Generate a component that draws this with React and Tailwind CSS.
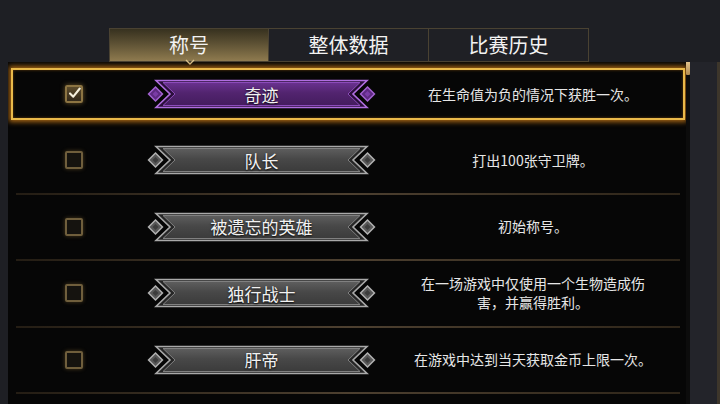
// Title list panel: tab strip on top, then a scrolling list of unlockable titles.
import React from 'react';

const TABS = ['称号', '整体数据', '比赛历史'];

const TITLES = [
  { name: '奇迹', desc: ['在生命值为负的情况下获胜一次。'], selected: true },
  { name: '队长', desc: ['打出100张守卫牌。'] },
  { name: '被遗忘的英雄', desc: ['初始称号。'] },
  { name: '独行战士', desc: ['在一场游戏中仅使用一个生物造成伤', '害，并赢得胜利。'] },
  { name: '肝帝', desc: ['在游戏中达到当天获取金币上限一次。'] },
];

const TONES = {
  grey: {
    id: 'rib-grey',
    edge: '#a9a9a9',
    back: '#262626',
    top: '#5e5e5e',
    mid: '#484848',
    bottom: '#3b3b3b',
    inner: '#808080',
    gemOut: '#b4b4b4',
    gemIn: '#585858',
    gemCore: '#3c3c3c',
  },
  purple: {
    id: 'rib-purple',
    edge: '#b06ee0',
    back: '#2a0f3a',
    top: '#6a3290',
    mid: '#52246f',
    bottom: '#441c5e',
    inner: '#8c4cba',
    gemOut: '#a564d4',
    gemIn: '#5e2a82',
    gemCore: '#7a3ca6',
  },
};

// diamond gem at either end of a ribbon
function Gem({ cx, t }) {
  const d = (r) => `${cx - r},15 ${cx},${15 - r} ${cx + r},15 ${cx},${15 + r}`;
  return (
    <g>
      <polygon points={d(8)} fill={t.gemOut} />
      <polygon points={d(6)} fill={t.gemIn} />
      <polygon points={d(3)} fill={t.gemCore} />
    </g>
  );
}

function Banner({ label, tone = 'grey' }) {
  const t = TONES[tone];
  return (
    <div className="relative w-[229px] h-[30px] flex items-center justify-center shrink-0">
      <svg className="absolute inset-0" width="229" height="30" viewBox="0 0 229 30">
        <defs>
          <linearGradient id={t.id} x1="0" y1="0" x2="0" y2="1">
            <stop offset="0" stopColor={t.top} />
            <stop offset="0.45" stopColor={t.mid} />
            <stop offset="1" stopColor={t.bottom} />
          </linearGradient>
        </defs>
        <polygon
          points="9,1.5 220,1.5 206,15 220,28.5 9,28.5 23,15"
          fill={t.back}
          stroke={t.edge}
          strokeWidth="1.6"
        />
        <polygon
          points="16,3.5 213,3.5 201,15 213,26.5 16,26.5 28,15"
          fill={`url(#${t.id})`}
          stroke={t.inner}
          strokeWidth="1"
        />
        <Gem cx={8.5} t={t} />
        <Gem cx={220.5} t={t} />
      </svg>
      <span className="relative text-[17px] leading-none text-[#f2f2f2] [text-shadow:0_1px_2px_rgba(0,0,0,0.9)]">
        {label}
      </span>
    </div>
  );
}

function CheckBox({ checked }) {
  if (checked) {
    return (
      <div className="w-[18px] h-[18px] rounded-[2px] border-2 border-[#8c7442] bg-gradient-to-b from-[#5c4b2b] to-[#33291a] shadow-[0_0_5px_rgba(190,150,70,0.55)] flex items-center justify-center shrink-0">
        <svg width="16" height="14" viewBox="0 0 16 14" className="-mt-[3px] ml-[1px]">
          <path d="M2.5 7.5 L6.5 11.5 L14.5 1.5" fill="none" stroke="#f6efdc" strokeWidth="2.6" strokeLinecap="round" strokeLinejoin="round" />
        </svg>
      </div>
    );
  }
  return (
    <div className="w-[18px] h-[18px] rounded-[2px] border-2 border-[#6f5e3c] bg-[#15130f] shadow-[0_0_4px_rgba(150,120,60,0.45)] shrink-0" />
  );
}

function Separator({ hidden }) {
  return (
    <div
      className={`ml-[8px] mr-[6px] h-[2px] shrink-0 ${
        hidden ? '' : 'bg-gradient-to-r from-[#241d14] via-[#4d4030] to-[#2e2519]'
      }`}
    />
  );
}

function Row({ item, first, afterSelected }) {
  return (
    <div className={`relative flex flex-col shrink-0 ${first ? 'h-[64px]' : 'h-[66.5px]'}`}>
      {!first && <Separator hidden={afterSelected} />}
      {item.selected && (
        <div className="absolute left-[3px] right-[1px] top-[6px] bottom-[6px] border-2 border-[#e9b94a] shadow-[0_0_5px_2px_rgba(196,120,24,0.85),inset_0_0_3px_rgba(196,120,24,0.5)]" />
      )}
      <div className="relative flex-1 flex items-center pl-[57px]">
        <CheckBox checked={item.selected} />
        <div className="ml-[64px]">
          <Banner label={item.name} tone={item.selected ? 'purple' : 'grey'} />
        </div>
        <div className="flex-1 pl-[4px] flex flex-col items-center text-[14px] leading-[19px] text-[#e6e6e6] whitespace-nowrap">
          {item.desc.map((line) => (
            <span key={line}>{line}</span>
          ))}
        </div>
      </div>
    </div>
  );
}

export default function App() {
  return (
    <div className="w-[720px] h-[404px] overflow-hidden bg-[#1e1f24] flex flex-col font-['Noto_Sans_CJK_SC','Noto_Sans',sans-serif]">
      {/* tab strip */}
      <div className="h-[62px] pt-[28px] pl-[109px] flex shrink-0">
        {TABS.map((tab, i) => (
          <div
            key={tab}
            className={`relative w-[160px] h-[34px] flex items-center justify-center text-[20px] text-[#f2f2f2] border border-[#4a4232] ${
              i > 0 ? 'border-l-0 bg-[#1f2025]' : 'bg-gradient-to-b from-[#37311f] to-[#8f7b4f]'
            }`}
          >
            {tab}
            {i === 0 && (
              <svg className="absolute left-[75px] -bottom-[4px]" width="10" height="6" viewBox="0 0 10 6">
                <path d="M1 1 L5 5 L9 1" fill="none" stroke="#d9c28e" strokeWidth="1.4" />
              </svg>
            )}
          </div>
        ))}
      </div>

      {/* list panel + scrollbar */}
      <div className="flex flex-1 min-h-0">
        <div className="w-[8px] shrink-0" />
        <div className="w-[678px] bg-[#060606] flex flex-col overflow-hidden shrink-0">
          {TITLES.map((item, i) => (
            <Row
              key={item.name}
              item={item}
              first={i === 0}
              afterSelected={i > 0 && TITLES[i - 1].selected}
            />
          ))}
          <Separator />
        </div>
        <div className="w-[4px] bg-[#0c0c0c] shrink-0">
          <div className="h-[13px] bg-gradient-to-b from-[#e2c28a] to-[#b28c52] rounded-b-[1px]" />
        </div>
        <div className="flex-1 bg-[#23242a]" />
        <div className="w-[3px] bg-[#3d362b]" />
      </div>
    </div>
  );
}
